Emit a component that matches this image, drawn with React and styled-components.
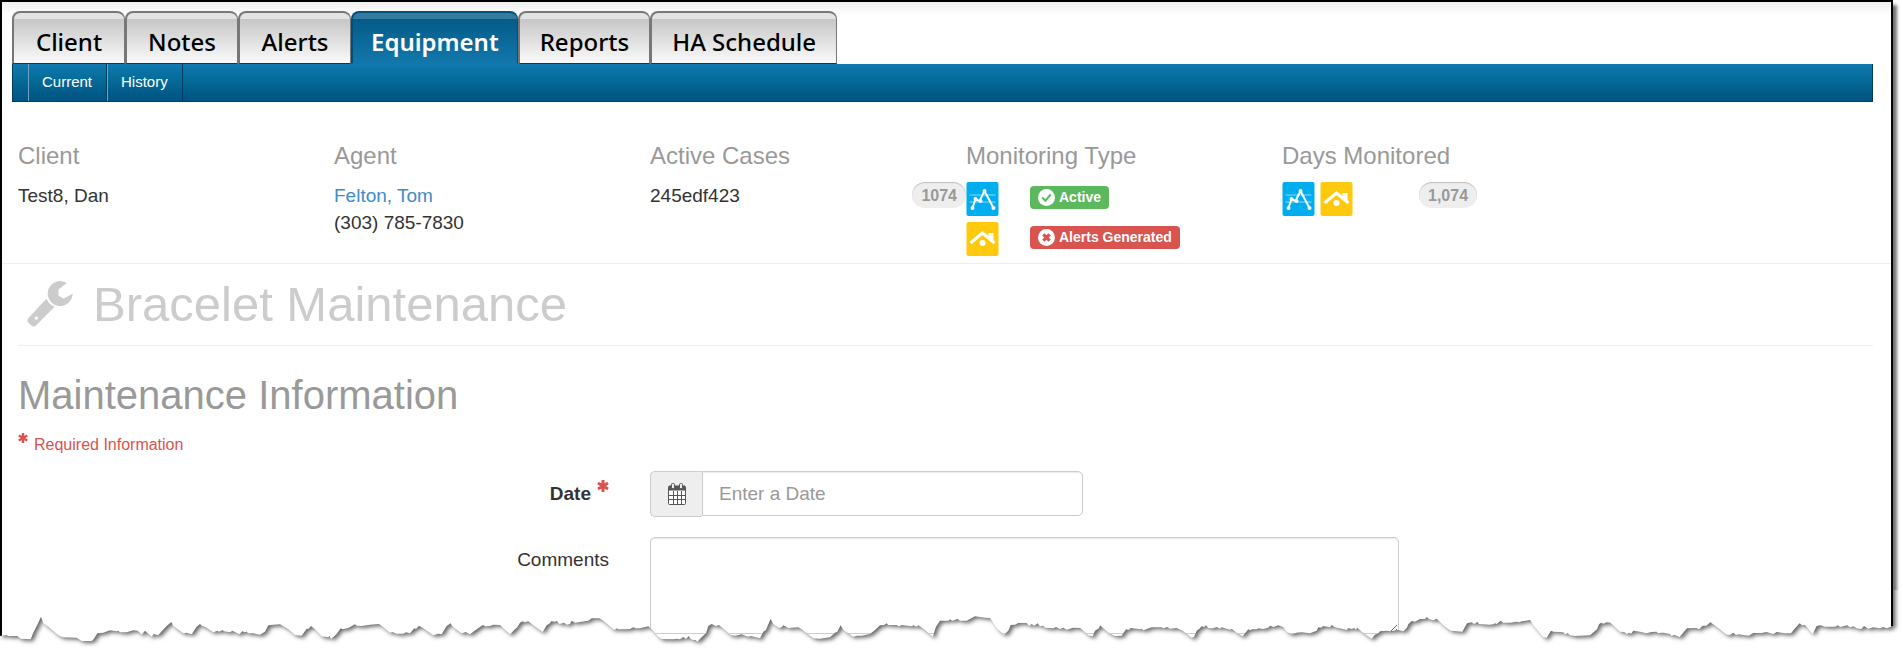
import React from 'react';
import styled, { createGlobalStyle } from 'styled-components';

const palette = {
  text: '#333',
  muted: '#999',
  faint: '#ccc',
  line: '#eee',
  link: '#428bca',
  danger: '#d9534f',
  success: '#5cb85c',
  navy: '#003a5c',
};

const GlobalStyle = createGlobalStyle`
  * {
    box-sizing: border-box;
  }

  body {
    margin: 0;
    background: #fff;
    color: ${palette.text};
    font-family: "Liberation Sans", Arial, sans-serif;
    font-size: 19px;
    line-height: 27px;
  }
`;

const Page = styled.div`
  position: relative;
  overflow: hidden;
  padding-right: 10px;
`;

const Frame = styled.div`
  padding: 9px 0 24px;
  border: 2px solid #000;
  border-bottom: 0;
  background: linear-gradient(#f0f0f0, #fff 14px);
  box-shadow: 4px 5px 3px rgba(0, 0, 0, 0.55);
`;

const Navigation = styled.nav`
  margin: 0 18px 0 10px;
`;

const TabList = styled.div`
  display: flex;
`;

const Tab = styled.a`
  min-width: 113px;
  height: 53px;
  padding: 11px ${({ $active }) => ($active ? 18 : 20)}px 0;
  border: 2px solid ${({ $active }) => ($active ? '#00507f' : '#777')};
  border-width: 2px 1px 1px 2px;
  border-bottom-color: ${({ $active }) => ($active ? '#1277ab' : palette.navy)};
  border-radius: 8px 8px 0 0;
  background: ${({ $active }) =>
    $active
      ? 'linear-gradient(#357a9f 6px, #045b88 6px, #1277ab)'
      : 'linear-gradient(#e3e3e3 6px, #c6c6c6 6px, #fafafa)'};
  color: ${({ $active }) => ($active ? '#fff' : '#000')};
  font-family: "Noto Sans", "Open Sans", sans-serif;
  font-size: 24px;
  font-weight: ${({ $active }) => ($active ? 600 : 500)};
  line-height: 36px;
  text-align: center;
  text-decoration: none;
  white-space: nowrap;
`;

const SubNav = styled.div`
  display: flex;
  height: 38px;
  padding-left: 15px;
  border: 1px solid ${palette.navy};
  border-top: 0;
  background: linear-gradient(#1179b0, #07709f 30%, #005684 90%);
`;

const SubNavLink = styled.a`
  padding: 0 14px 0 13px;
  border-left: 1px solid #6ba5c4;
  border-right: 1px solid ${palette.navy};
  color: #fff;
  font-size: 15px;
  line-height: 36px;
  text-decoration: none;
`;

const Summary = styled.section`
  display: grid;
  grid-template-columns: repeat(4, minmax(0, 316px)) 1fr;
  padding: 39px 16px 1px;
  border-bottom: 1px solid ${palette.line};
`;

const SummaryTitle = styled.h4`
  margin: 0 0 11px;
  color: ${palette.muted};
  font-size: 24px;
  font-weight: 400;
  line-height: 30px;
`;

const SummaryText = styled.div`
  line-height: 27px;
`;

const SplitText = styled.div`
  display: flex;
  justify-content: space-between;
`;

const Link = styled.a`
  color: ${palette.link};
  text-decoration: none;
`;

const Badge = styled.span`
  height: 26px;
  padding: 0 9px;
  border-radius: 13px;
  background: ${palette.line};
  box-shadow: inset 0 1px 1px rgba(0, 0, 0, 0.2);
  color: ${palette.muted};
  font-size: 16px;
  font-weight: 700;
  line-height: 28px;
`;

const MonitorRow = styled.div`
  display: grid;
  grid-template-columns: 64px auto;
  justify-content: start;
  align-items: start;
  height: 34px;
  margin-bottom: 6px;
`;

const DaysRow = styled.div`
  display: grid;
  grid-template-columns: 137px auto;
  justify-content: start;
  align-items: start;
`;

const IconPair = styled.div`
  display: flex;
  gap: 5px;
`;

const Status = styled.span`
  display: inline-flex;
  align-items: center;
  justify-self: start;
  gap: 4px;
  height: 23px;
  margin-top: 4px;
  padding: 0 8px;
  border-radius: 4px;
  background: ${({ $color }) => $color};
  color: #fff;
  font-size: 14px;
  font-weight: 700;
  white-space: nowrap;
`;

const Content = styled.main`
  padding: 0 18px 0 16px;
`;

const PageTitle = styled.h1`
  display: flex;
  align-items: center;
  gap: 20px;
  margin: 0;
  padding: 10px 9px 11px;
  border-bottom: 1px solid ${palette.line};
  color: ${palette.faint};
  font-size: 49px;
  font-weight: 400;
  line-height: 60px;
`;

const SectionTitle = styled.h2`
  margin: 25px 0 14px;
  color: ${palette.muted};
  font-size: 40px;
  font-weight: 400;
  line-height: 48px;
`;

const RequiredNote = styled.p`
  display: flex;
  gap: 6px;
  margin: 0 0 14px;
  color: ${palette.danger};
  font-size: 16px;
  line-height: 24px;
`;

const FormRow = styled.div`
  display: grid;
  grid-template-columns: minmax(0, 591px) minmax(0, 749px);
  column-gap: 41px;
  margin-bottom: 20px;

  &:last-child {
    margin-bottom: 0;
  }
`;

const Label = styled.label`
  display: flex;
  justify-content: flex-end;
  gap: 6px;
  padding-top: 9px;
  font-weight: ${({ $strong }) => ($strong ? 700 : 400)};
`;

const InputGroup = styled.div`
  display: flex;
  width: 433px;
  max-width: 100%;
`;

const Addon = styled.span`
  display: flex;
  align-items: center;
  justify-content: center;
  width: 52px;
  height: 46px;
  border: 1px solid ${palette.faint};
  border-right: 0;
  border-radius: 5px 0 0 5px;
  background: ${palette.line};
`;

const Input = styled.input`
  flex: 1;
  min-width: 0;
  height: 45px;
  padding: 0 16px;
  border: 1px solid ${palette.faint};
  border-radius: 0 5px 5px 0;
  box-shadow: inset 0 1px 1px rgba(0, 0, 0, 0.08);
  color: ${palette.text};
  font: inherit;

  &::placeholder {
    color: ${palette.muted};
    opacity: 1;
  }
`;

const TextArea = styled.textarea`
  display: block;
  width: 100%;
  height: 97px;
  padding: 8px 16px;
  border: 1px solid ${palette.faint};
  border-radius: 5px;
  box-shadow: inset 0 1px 1px rgba(0, 0, 0, 0.08);
  font: inherit;
  resize: vertical;
`;

const TornEdge = styled.svg`
  position: absolute;
  bottom: 0;
  left: 0;
  width: 100%;
  height: 68px;
  pointer-events: none;
`;

const TABS = ['Client', 'Notes', 'Alerts', 'Equipment', 'Reports', 'HA Schedule'];

// Outline of the ripped paper, left to right
const TEAR = `0,138 18,135 25,138 52,138 62,146 92,148 100,128 115,98 123,80 130,100 145,110
  175,136 188,142 230,143 245,153 275,153 282,146 292,130 310,128 330,121 350,124 355,122 360,127
  380,127 400,121 413,122 425,134 435,122 440,127 455,140 462,131 467,134 475,135 500,108 514,96
  520,108 550,130 560,128 575,133 590,110 600,102 606,108 615,110 640,127 652,122 657,125 668,120
  672,124 690,127 697,122 718,133 728,123 732,127 740,125 745,130 760,130 780,134 795,125 805,106
  820,104 840,103 865,118 885,135 905,137 920,116 925,117 933,108 945,118 965,139 985,142 988,137
  993,147 1010,132 1022,115 1028,118 1045,114 1065,103 1070,107 1085,108 1110,104 1137,102
  1150,112 1170,128 1177,126 1190,131 1210,131 1218,127 1230,130 1243,115 1248,117 1257,107
  1270,115 1300,136 1315,131 1325,133 1340,108 1352,100 1358,110 1385,130 1397,126 1410,133
  1430,118 1445,107 1450,105 1455,109 1470,108 1480,104 1500,105 1510,115 1530,133 1545,118
  1552,112 1560,98 1568,94 1573,97 1585,94 1600,106 1628,126 1640,106 1650,100 1653,94 1665,95
  1670,92 1678,102 1693,98 1700,104 1710,102 1715,92 1725,98 1740,96 1765,92 1775,85 1798,85
  1810,92 1840,118 1845,119 1850,115 1855,118 1875,118 1890,117 1900,112 1907,115 1920,115
  1945,109 1955,118 1975,140 1985,147 2020,148 2030,146 2040,148 2050,141 2058,147 2066,138
  2072,147 2080,150 2087,150 2092,155 2105,142 2112,135 2118,130 2125,108 2135,102 2148,108
  2157,105 2172,118 2190,134 2205,137 2225,133 2245,140 2252,138 2280,145 2290,125 2298,120
  2303,107 2312,87 2320,102 2337,114 2345,112 2350,106 2365,114 2395,112 2405,118 2440,145
  2460,146 2490,142 2505,128 2512,125 2522,106 2530,120 2560,140 2570,137 2585,137 2610,132
  2625,120 2640,106 2652,105 2660,100 2665,105 2690,105 2697,109 2705,105 2735,109 2740,106
  2750,110 2755,106 2775,120 2798,140 2808,110 2820,92 2845,92 2850,88 2857,92 2865,90 2872,86
  2880,92 2900,92 2925,79 2955,83 2970,84 2978,96 2990,115 3012,134 3025,122 3032,105 3045,104
  3055,99 3080,99 3087,107 3095,102 3103,107 3113,100 3120,109 3130,107 3135,113 3160,115
  3168,111 3180,117 3190,113 3200,119 3220,113 3240,114 3250,122 3265,136 3278,139 3285,122
  3297,115 3300,106 3310,115 3328,130 3345,138 3365,137 3378,118 3387,120 3392,114 3410,116
  3420,118 3425,116 3430,121 3455,112 3485,112 3490,115 3502,111 3510,116 3530,114 3548,122
  3575,143 3582,141 3590,122 3600,115 3604,109 3613,111 3618,106 3625,114 3640,115 3650,111
  3660,116 3665,112 3690,119 3695,116 3710,128 3728,139 3745,118 3750,121 3756,118 3770,118
  3775,115 3790,117 3805,113 3810,107 3820,111 3835,106 3850,112 3860,125 3875,133 3890,128
  3905,127 3930,130 3940,126 3950,122 3955,112 3963,113 3970,108 3990,112 3995,105 4005,112
  4025,116 4040,120 4045,114 4055,117 4063,114 4067,119 4072,113 4085,125 4115,146 4125,134
  4135,130 4140,124 4160,122 4170,124 4195,120 4210,124 4220,115 4225,103 4235,93 4245,95
  4260,87 4275,87 4280,81 4287,87 4300,91 4310,86 4330,106 4352,122 4387,125 4401,100 4415,97
  4422,102 4433,96 4437,102 4468,104 4480,103 4485,100 4490,102 4502,92 4510,98 4531,98 4550,95
  4558,97 4565,94 4590,90 4600,106 4630,142 4640,143 4653,122 4660,125 4690,127 4695,133
  4703,129 4710,136 4727,138 4770,136 4791,118 4797,103 4803,98 4810,101 4820,97 4831,98
  4860,125 4873,126 4880,132 4888,128 4893,131 4900,122 4920,125 4939,130 4955,126 4970,125
  4973,129 4990,128 5010,132 5015,138 5022,134 5039,141 5061,115 5090,114 5097,118 5108,107
  5119,107 5131,97 5150,110 5180,134 5190,135 5200,128 5208,135 5215,133 5246,137 5260,129
  5285,129 5299,126 5320,132 5330,126 5355,130 5373,130 5385,115 5399,100 5406,106 5415,105
  5438,132 5445,118 5450,108 5462,106 5475,110 5505,110 5514,106 5520,111 5542,106 5550,112
  5560,109 5570,115 5584,117 5592,108 5605,116 5620,112 5640,115 5650,111 5660,115 5679,108`;

const TornBottom = () => (
  <TornEdge viewBox="0 0 5709 204" preserveAspectRatio="none" aria-hidden="true">
    <defs>
      <clipPath id="below-tear">
        <polygon points={`${TEAR} 5679,0 5709,0 5709,204 0,204`} />
      </clipPath>
      <filter id="tear-blur" x="-1%" y="-20%" width="102%" height="140%">
        <feGaussianBlur stdDeviation="6" />
      </filter>
    </defs>
    <g clipPath="url(#below-tear)">
      <rect width="5709" height="204" fill="#fff" />
      <polygon
        points={`0,-60 ${TEAR} 5679,-60`}
        transform="translate(8 6)"
        fill="#666"
        filter="url(#tear-blur)"
      />
    </g>
  </TornEdge>
);

const WrenchIcon = () => (
  <svg width="46" height="46" viewBox="26 29 140 140" fill="currentColor" aria-hidden="true">
    <path d="M147 35 A38 38 0 1 0 165 68 L138 82 L122 74 L122 55 Z" />
    <path
      fillRule="evenodd"
      d="M86 82 Q90 99 110 107 L55 163 Q48 171 40 165 L30 156 Q24 149 31 141 Z M54 137 a5 5 0 1 0 1 0 Z"
    />
  </svg>
);

const TrackIcon = () => (
  <svg width="33" height="34" viewBox="0 0 32 34" role="img" aria-label="Tracking">
    <rect width="32" height="34" rx="2" fill="#00aeef" />
    <path d="M3 13 H29 M3 20 H29" stroke="#8ddcf8" />
    <path d="M6 26 L9 17 L13 19 L18 9 L27 26" fill="none" stroke="#fff" strokeWidth="2" />
    <g fill="#fff">
      <circle cx="6" cy="26" r="2" />
      <circle cx="9" cy="17" r="2" />
      <circle cx="14" cy="19" r="2" />
      <circle cx="18" cy="9" r="2" />
      <circle cx="27" cy="26" r="2" />
    </g>
  </svg>
);

const HomeIcon = () => (
  <svg width="33" height="34" viewBox="0 0 32 34" role="img" aria-label="Home">
    <rect width="32" height="34" rx="2" fill="#ffc90e" />
    <path d="M4 21 L16 11 L28 21" fill="none" stroke="#fff" strokeWidth="3" />
    <path d="M22 11 H27 V20 L22 16 Z" fill="#fff" />
    <circle cx="16" cy="21" r="3" fill="#fff" />
  </svg>
);

const CheckIcon = () => (
  <svg width="17" height="17" viewBox="0 0 16 16" aria-hidden="true">
    <circle cx="8" cy="8" r="8" fill="#fff" />
    <path d="M4 8 L7 11 L12 5" fill="none" stroke={palette.success} strokeWidth="2" />
  </svg>
);

const CrossIcon = () => (
  <svg width="17" height="17" viewBox="0 0 16 16" aria-hidden="true">
    <circle cx="8" cy="8" r="8" fill="#fff" />
    <path d="M5 5 L11 11 M11 5 L5 11" stroke={palette.danger} strokeWidth="3" />
  </svg>
);

const Asterisk = ({ size }) => (
  <svg width={size} height={size} viewBox="0 0 12 12" aria-hidden="true">
    <path
      d="M6 0 V12 M1 3 L11 9 M11 3 L1 9"
      stroke={palette.danger}
      strokeWidth="3"
    />
  </svg>
);

const CalendarIcon = () => (
  <svg width="18" height="22" viewBox="0 0 18 22" fill="none" stroke="#555" aria-hidden="true">
    <rect x="0.5" y="3.5" width="17" height="18" rx="1" fill="#fff" />
    <path d="M1 3 H17 V7 H1 Z" fill="#555" />
    <path d="M1 12.5 H17 M1 16.5 H17 M5.500 8 V21 M9.500 8 V21 M13.500 8 V21" />
    <rect x="3.5" y="0.5" width="3" height="5" rx="1" fill="#eee" />
    <rect x="11.5" y="0.5" width="3" height="5" rx="1" fill="#eee" />
  </svg>
);

const Header = () => (
  <Navigation>
    <TabList>
      {TABS.map((name) => (
        <Tab key={name} href="#" $active={name === 'Equipment'}>
          {name}
        </Tab>
      ))}
    </TabList>
    <SubNav>
      <SubNavLink href="#">Current</SubNavLink>
      <SubNavLink href="#">History</SubNavLink>
    </SubNav>
  </Navigation>
);

const ClientSummary = () => (
  <Summary>
    <div>
      <SummaryTitle>Client</SummaryTitle>
      <SummaryText>Test8, Dan</SummaryText>
    </div>
    <div>
      <SummaryTitle>Agent</SummaryTitle>
      <SummaryText>
        <Link href="#">Felton, Tom</Link>
      </SummaryText>
      <SummaryText>(303) 785-7830</SummaryText>
    </div>
    <div>
      <SummaryTitle>Active Cases</SummaryTitle>
      <SplitText>
        245edf423
        <Badge>1074</Badge>
      </SplitText>
    </div>
    <div>
      <SummaryTitle>Monitoring Type</SummaryTitle>
      <MonitorRow>
        <TrackIcon />
        <Status $color={palette.success}>
          <CheckIcon />
          Active
        </Status>
      </MonitorRow>
      <MonitorRow>
        <HomeIcon />
        <Status $color={palette.danger}>
          <CrossIcon />
          Alerts Generated
        </Status>
      </MonitorRow>
    </div>
    <div>
      <SummaryTitle>Days Monitored</SummaryTitle>
      <DaysRow>
        <IconPair>
          <TrackIcon />
          <HomeIcon />
        </IconPair>
        <Badge>1,074</Badge>
      </DaysRow>
    </div>
  </Summary>
);

const MaintenanceForm = () => (
  <form>
    <FormRow>
      <Label htmlFor="date" $strong>
        Date <Asterisk size={12} />
      </Label>
      <InputGroup>
        <Addon>
          <CalendarIcon />
        </Addon>
        <Input id="date" type="text" placeholder="Enter a Date" />
      </InputGroup>
    </FormRow>
    <FormRow>
      <Label htmlFor="comments">Comments</Label>
      <TextArea id="comments" />
    </FormRow>
  </form>
);

const App = () => (
  <Page>
    <GlobalStyle />
    <Frame>
      <Header />
      <ClientSummary />
      <Content>
        <PageTitle>
          <WrenchIcon />
          Bracelet Maintenance
        </PageTitle>
        <SectionTitle>Maintenance Information</SectionTitle>
        <RequiredNote>
          <Asterisk size={10} />
          Required Information
        </RequiredNote>
        <MaintenanceForm />
      </Content>
    </Frame>
    <TornBottom />
  </Page>
);

export default App;
